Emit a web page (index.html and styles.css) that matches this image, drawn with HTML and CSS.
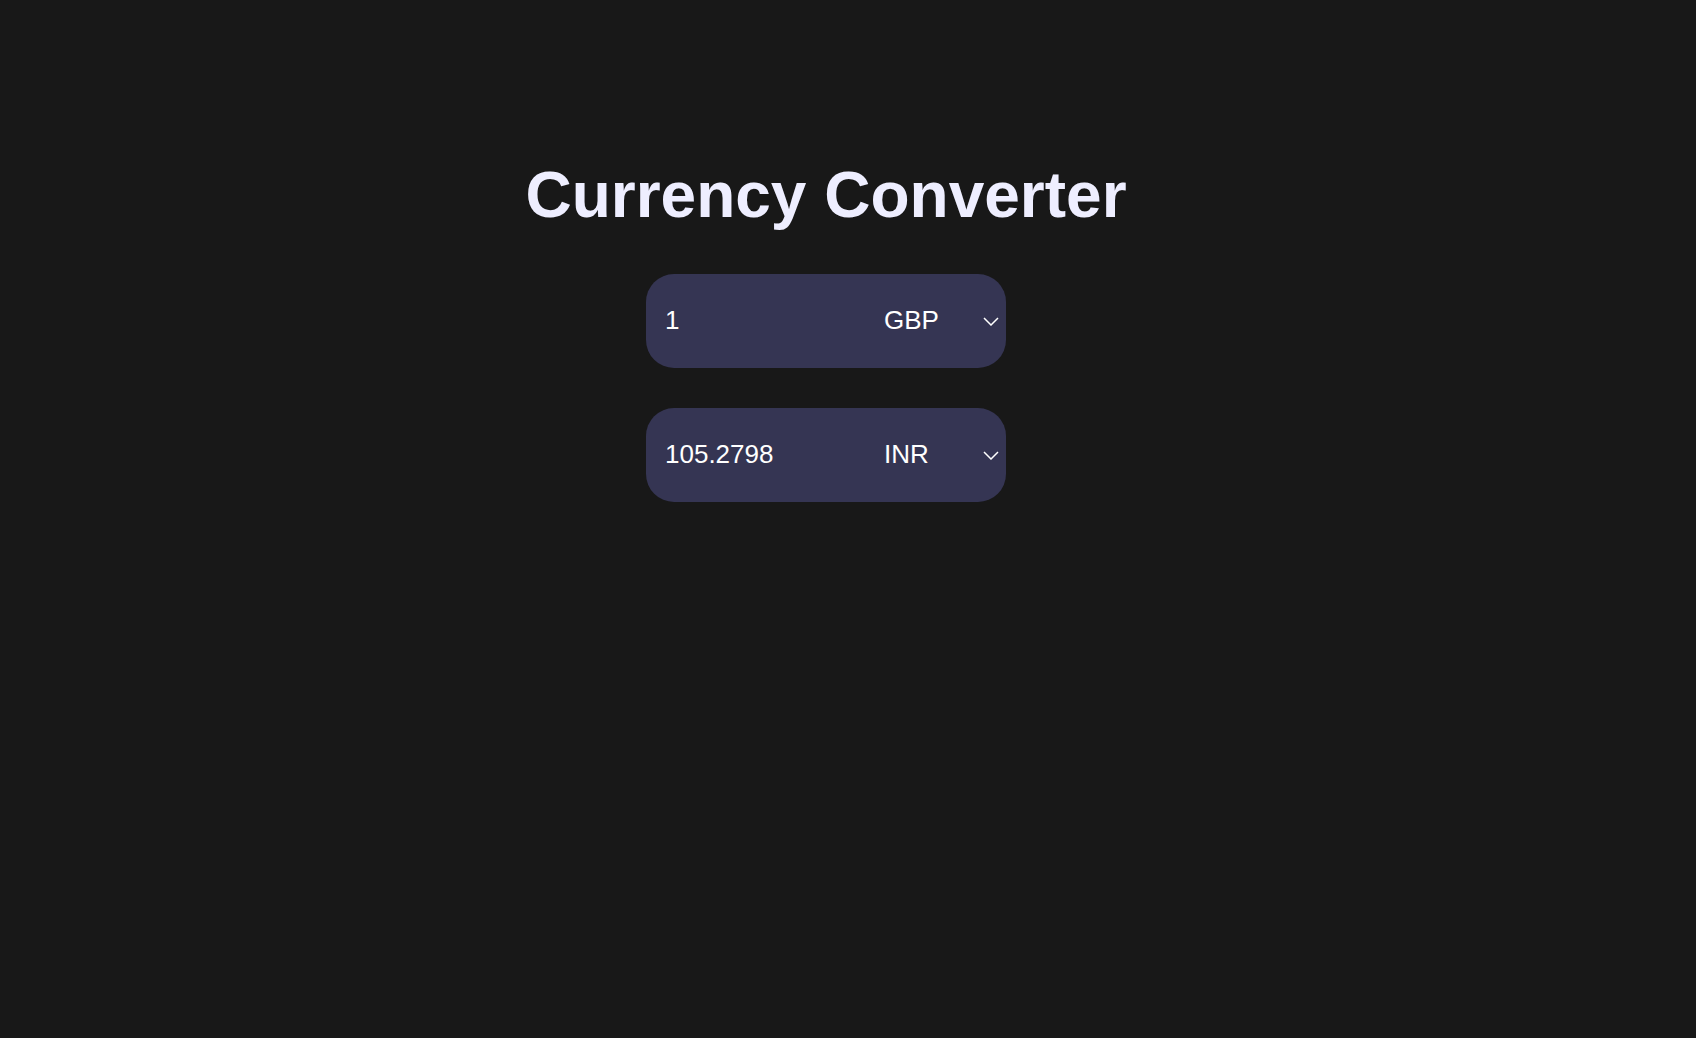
FILE: index.html
```html
<!DOCTYPE html>
<html lang="en">
<head>
<meta charset="utf-8">
<title>Currency Converter</title>
<link rel="stylesheet" href="styles.css">
</head>
<body>
<main class="app">
  <h1 class="title">Currency Converter</h1>
  <div class="converter">
    <div class="field">
      <span class="amount">1</span>
      <span class="currency">GBP</span>
      <svg class="chev" width="16" height="9" viewBox="0 0 16 9" aria-hidden="true"><path d="M1 1 L8 8 L15 1" fill="none" stroke="#ffffff" stroke-width="1.5"/></svg>
    </div>
    <div class="field">
      <span class="amount">105.2798</span>
      <span class="currency">INR</span>
      <svg class="chev" width="16" height="9" viewBox="0 0 16 9" aria-hidden="true"><path d="M1 1 L8 8 L15 1" fill="none" stroke="#ffffff" stroke-width="1.5"/></svg>
    </div>
  </div>
</main>
</body>
</html>
```
FILE: styles.css
```css
html, body {
  margin: 0;
  padding: 0;
  background: #181818;
  height: 100%;
}
body {
  font-family: "Liberation Sans", Arial, sans-serif;
}
.app {
  width: 1652px;
  display: flex;
  flex-direction: column;
  align-items: center;
  padding-top: 158px;
}
.title {
  margin: 0;
  font-size: 64px;
  font-weight: 700;
  line-height: normal;
  color: #eeeeff;
}
.converter {
  margin-top: 42px;
  display: flex;
  flex-direction: column;
  gap: 40px;
}
.field {
  width: 360px;
  height: 94px;
  box-sizing: border-box;
  border-radius: 28px;
  background: #353553;
  display: flex;
  align-items: center;
  padding-left: 19px;
  padding-bottom: 2px;
  color: #ffffff;
  font-size: 26px;
}
.amount {
  width: 219px;
}
.currency {
  flex: 1;
}
.chev {
  margin-right: 7px;
  margin-top: 2px;
}
```
